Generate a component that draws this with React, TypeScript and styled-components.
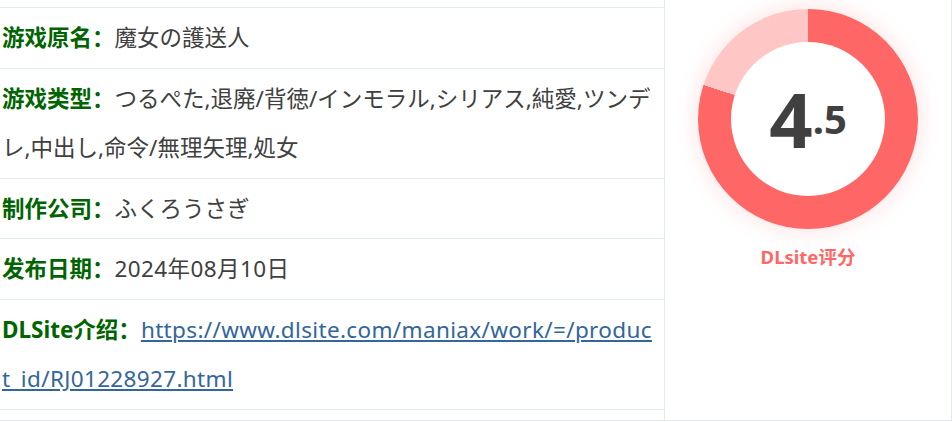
import React from "react";
import styled, { createGlobalStyle } from "styled-components";

const GlobalStyle = createGlobalStyle`
  html, body {
    margin: 0;
    padding: 0;
    background: #ffffff;
  }
  body {
    font-family: "Noto Sans", "Noto Sans CJK SC", sans-serif;
  }
`;

const Wrapper = styled.div`
  display: flex;
  width: 952px;
  height: 421px;
  box-sizing: border-box;
  border-bottom: 1px solid #e4ecf3;
  overflow: hidden;
`;

const InfoCol = styled.div`
  width: 664px;
  flex: none;
  padding-top: 7px;
  box-sizing: border-box;
`;

const InfoRow = styled.div`
  border-top: 1px solid #e4ecf3;
  padding: 5px 7px 5.33px 2px;
  line-height: 49.33px;
  font-size: 22.5px;
  color: #404040;
  word-break: break-all;
  &:last-child {
    border-bottom: 1px solid #e4ecf3;
  }
`;

const Label = styled.strong`
  color: #006400;
  font-weight: 700;
`;

const Value = styled.span<{ $latin?: boolean }>`
  letter-spacing: ${(p) => (p.$latin ? "0.4px" : "0")};
`;

const Link = styled.a`
  color: #336699;
  text-decoration: underline;
  letter-spacing: 0.35px;
`;

const RatingCol = styled.div`
  width: 288px;
  flex: none;
  box-sizing: border-box;
  border-left: 1px solid #e4ecf3;
  border-right: 1px solid #e4ecf3;
  display: flex;
  flex-direction: column;
  align-items: center;
  padding-top: 9px;
`;

const Ring = styled.div<{ $pct: number }>`
  width: 220px;
  height: 220px;
  border-radius: 50%;
  background: conic-gradient(#ff6666 0 ${(p) => p.$pct}%, #ffc6c6 ${(p) => p.$pct}% 100%);
  box-shadow: 0 0 22px rgba(255, 102, 102, 0.22);
  display: flex;
  align-items: center;
  justify-content: center;
`;

const Inner = styled.div`
  width: 154px;
  height: 154px;
  border-radius: 50%;
  background: #ffffff;
  display: flex;
  align-items: center;
  justify-content: center;
  color: #404040;
  font-family: "Noto Sans", sans-serif;
  font-weight: 700;
`;

const ScoreInt = styled.span`
  font-size: 76px;
  line-height: 1;
`;

const ScoreDec = styled.span`
  font-size: 40px;
  line-height: 1;
`;

const RatingLabel = styled.div`
  margin-top: 14px;
  color: #ff6666;
  font-weight: 700;
  font-size: 18.5px;
  line-height: 28px;
`;

const rows: { label: string; value: React.ReactNode }[] = [
  { label: "游戏原名：", value: <Value>魔女の護送人</Value> },
  {
    label: "游戏类型：",
    value: (
      <Value>つるぺた,退廃/背徳/インモラル,シリアス,純愛,ツンデレ,中出し,命令/無理矢理,処女</Value>
    ),
  },
  { label: "制作公司：", value: <Value>ふくろうさぎ</Value> },
  { label: "发布日期：", value: <Value $latin>2024年08月10日</Value> },
  {
    label: "DLSite介绍：",
    value: (
      <Link href="#">https://www.dlsite.com/maniax/work/=/product_id/RJ01228927.html</Link>
    ),
  },
];

export default function App() {
  return (
    <>
      <GlobalStyle />
      <Wrapper>
        <InfoCol>
          {rows.map((r) => (
            <InfoRow key={r.label}>
              <Label>{r.label}</Label>
              {r.value}
            </InfoRow>
          ))}
        </InfoCol>
        <RatingCol>
          <Ring $pct={80}>
            <Inner>
              <ScoreInt>4</ScoreInt>
              <ScoreDec>.5</ScoreDec>
            </Inner>
          </Ring>
          <RatingLabel>DLsite评分</RatingLabel>
        </RatingCol>
      </Wrapper>
    </>
  );
}
